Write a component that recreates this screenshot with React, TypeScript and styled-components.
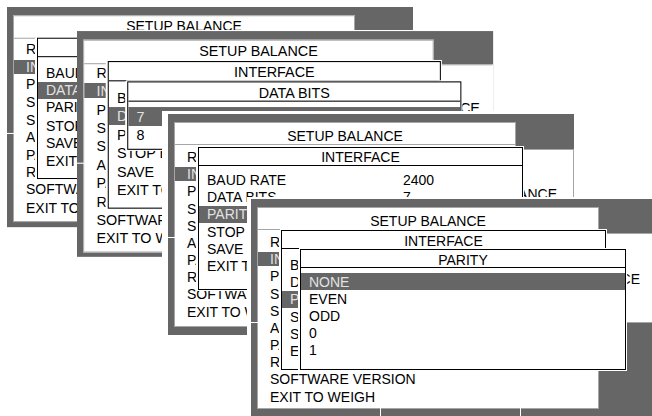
import styled, { createGlobalStyle } from "styled-components";

const GlobalStyle = createGlobalStyle`
  html, body {
    margin: 0;
    padding: 0;
    background: #ffffff;
  }
  body {
    font-family: "Liberation Sans", Arial, sans-serif;
    font-size: 14px;
    color: #000;
  }
`;

type Row = { label: string; value?: string };

type SubDialog = {
  title: string;
  rows: string[];
  active: number;
  top: number;
  gap: number;
  height: number;
};

type Shot = {
  x: number;
  y: number;
  sx: number;
  sy: number;
  padLeft: number;
  padTop: number;
  frameH: number;
  panelH: number;
  titlePad: [number, number];
  mainGap: number;
  sideTop: number;
  sideText: [number, number];
  sideEdge: boolean;
  ifTop: number;
  ifBottom: number;
  ifTitlePad: number;
  ifGap: number;
  active: number;
  sub?: SubDialog;
};

const MAIN_ROWS = [
  "READOUT",
  "INTERFACE",
  "PRINT",
  "STABILITY",
  "SLEEP",
  "AUTO-ZERO",
  "PASSWORD",
  "RESET",
  "SOFTWARE VERSION",
  "EXIT TO WEIGH",
];

const INTERFACE_ROWS: Row[] = [
  { label: "BAUD RATE", value: "2400" },
  { label: "DATA BITS", value: "7" },
  { label: "PARITY", value: "NONE" },
  { label: "STOP BITS", value: "1" },
  { label: "SAVE" },
  { label: "EXIT TO MENU" },
];

const SHOTS: Shot[] = [
  {
    x: 7,
    y: 7,
    sx: 1,
    sy: 1.024,
    padLeft: 0,
    padTop: 0,
    frameH: 215,
    panelH: 202,
    titlePad: [0, 3],
    mainGap: 1.4,
    sideTop: 34,
    sideText: [37, 16],
    sideEdge: true,
    ifTop: 30,
    ifBottom: 168,
    ifTitlePad: 2,
    ifGap: 6.4,
    active: 1,
  },
  {
    x: 77,
    y: 31,
    sx: 1.025,
    sy: 1.07,
    padLeft: 0,
    padTop: 1,
    frameH: 211,
    panelH: 199,
    titlePad: [0, 3],
    mainGap: -1,
    sideTop: 31,
    sideText: [32, 12],
    sideEdge: false,
    ifTop: 28,
    ifBottom: 166,
    ifTitlePad: 1.5,
    ifGap: 6.7,
    active: 1,
    sub: { title: "DATA BITS", rows: ["7", "8"], active: 0, top: 47, gap: 5.4, height: 64 },
  },
  {
    x: 168,
    y: 114,
    sx: 1,
    sy: 1,
    padLeft: 6,
    padTop: 3,
    frameH: 221,
    panelH: 205,
    titlePad: [5, 0],
    mainGap: 3.4,
    sideTop: 35,
    sideText: [36, 16],
    sideEdge: true,
    ifTop: 33,
    ifBottom: 176,
    ifTitlePad: 0,
    ifGap: 5.4,
    active: 2,
  },
  {
    x: 251,
    y: 199,
    sx: 1,
    sy: 1,
    padLeft: 4,
    padTop: 2,
    frameH: 218,
    panelH: 202,
    titlePad: [5, 0],
    mainGap: 3.4,
    sideTop: 34,
    sideText: [37, 16],
    sideEdge: true,
    ifTop: 31,
    ifBottom: 171,
    ifTitlePad: 3,
    ifGap: 7.4,
    active: 2,
    sub: {
      title: "PARITY",
      rows: ["NONE", "EVEN", "ODD", "0", "1"],
      active: 0,
      top: 50,
      gap: 5,
      height: 121,
    },
  },
];

const Desk = styled.div`
  position: relative;
  width: 652px;
  height: 416px;
  overflow: hidden;
  background: #ffffff;
`;

const Capture = styled.div`
  position: absolute;
  transform-origin: 0 0;
  background: #ffffff;
`;

const Frame = styled.div<{ $h: number }>`
  position: relative;
  display: flex;
  align-items: flex-start;
  width: 406px;
  height: ${(p) => p.$h}px;
  padding: 8px 0 0 6px;
  box-sizing: border-box;
  background: #666666;
`;

/* thin white seams where the photographed display was stitched */
const Seam = styled.span<{ $side: "left" | "bottom"; $at: number }>`
  position: absolute;
  background: #ffffff;
  ${(p) =>
    p.$side === "left"
      ? `left: 0; top: ${p.$at}px; width: 7px; height: 1px;`
      : `bottom: 0; left: ${p.$at}px; width: 1px; height: 9px;`}
`;

const Panel = styled.div<{ $h: number }>`
  display: flex;
  flex-direction: column;
  width: 342px;
  height: ${(p) => p.$h}px;
  box-sizing: border-box;
  border: 1px solid #a6a6a6;
  background: #ffffff;
  overflow: hidden;
`;

const PanelTitle = styled.div<{ $pad: [number, number] }>`
  display: flex;
  flex-shrink: 0;
  align-items: center;
  justify-content: center;
  height: 22px;
  padding: ${(p) => `${p.$pad[0]}px 0 ${p.$pad[1]}px`};
  box-sizing: border-box;
  border-bottom: 1px solid #a6a6a6;
`;

const RowList = styled.div<{ $gap: number }>`
  display: flex;
  flex-direction: column;
  margin-top: ${(p) => p.$gap}px;
`;

const MenuRow = styled.div<{ $on?: boolean; $indent: number; $inset?: number }>`
  display: flex;
  flex-shrink: 0;
  align-items: center;
  height: 17.2px;
  padding-left: ${(p) => p.$indent}px;
  white-space: nowrap;
  overflow: hidden;
  background: ${(p) => {
    if (!p.$on) return "transparent";
    const i = p.$inset ?? 0;
    return `linear-gradient(to bottom, transparent ${i}px, #666666 ${i}px, #666666 calc(100% - ${i}px), transparent calc(100% - ${i}px))`;
  }};
  color: ${(p) => (p.$on ? "#e2e2e2" : "#000000")};
`;

const Label = styled.span<{ $width?: number }>`
  display: inline-block;
  width: ${(p) => (p.$width ? `${p.$width}px` : "auto")};
  flex-shrink: 0;
`;

const Side = styled.div<{ $top: number; $text: [number, number]; $edge: boolean }>`
  flex: 1;
  height: ${(p) => 124 - p.$top}px;
  margin-top: ${(p) => p.$top - 8}px;
  margin-left: -1px;
  box-sizing: border-box;
  padding: ${(p) => `${p.$text[0]}px ${p.$text[1]}px 0 0`};
  border: 1px solid #a6a6a6;
  border-right-color: ${(p) => (p.$edge ? "#a6a6a6" : "#ffffff")};
  background: #ffffff;
  text-align: right;
  white-space: nowrap;
  overflow: hidden;
  direction: rtl;
`;

const Dialog = styled.div<{ $left: number; $top: number; $width: number; $height: number }>`
  position: absolute;
  left: ${(p) => p.$left}px;
  top: ${(p) => p.$top}px;
  width: ${(p) => p.$width}px;
  height: ${(p) => p.$height}px;
  box-sizing: border-box;
  border: 1px solid #000000;
  background: #ffffff;
  box-shadow: -2px 0 0 0 #ffffff, 0 0 0 1px #ffffff;
  overflow: hidden;
`;

const DialogTitle = styled.div<{ $pad: number }>`
  display: flex;
  flex-shrink: 0;
  justify-content: center;
  align-items: center;
  height: 18px;
  padding-top: ${(p) => p.$pad}px;
  box-sizing: border-box;
  border-bottom: 1px solid #000000;
`;

function Screenshot({ shot }: { shot: Shot }) {
  return (
    <Capture
      style={{
        left: shot.x - shot.padLeft,
        top: shot.y - shot.padTop * shot.sy,
        padding: `${shot.padTop}px 0 0 ${shot.padLeft}px`,
        transform: `scale(${shot.sx}, ${shot.sy})`,
      }}
    >
      <Frame $h={shot.frameH}>
        <Panel $h={shot.panelH}>
          <PanelTitle $pad={shot.titlePad}>SETUP BALANCE</PanelTitle>
          <RowList $gap={shot.mainGap}>
            {MAIN_ROWS.map((r, i) => (
              <MenuRow key={r} $indent={12} $inset={1.5} $on={i === 1}>
                {r}
              </MenuRow>
            ))}
          </RowList>
        </Panel>
        <Side $top={shot.sideTop} $text={shot.sideText} $edge={shot.sideEdge}>
          SETUP BALANCE
        </Side>

        <Dialog
          $left={30}
          $top={shot.ifTop}
          $width={325}
          $height={shot.ifBottom - shot.ifTop}
        >
          <DialogTitle $pad={shot.ifTitlePad}>INTERFACE</DialogTitle>
          <RowList $gap={shot.ifGap}>
            {INTERFACE_ROWS.map((r, i) => (
              <MenuRow key={r.label} $indent={8} $on={i === shot.active}>
                <Label $width={196}>{r.label}</Label>
                {r.value && <Label>{r.value}</Label>}
              </MenuRow>
            ))}
          </RowList>
        </Dialog>

        {shot.sub && (
          <Dialog $left={49} $top={shot.sub.top} $width={326} $height={shot.sub.height}>
            <DialogTitle $pad={2}>{shot.sub.title}</DialogTitle>
            <RowList $gap={shot.sub.gap}>
              {shot.sub.rows.map((r, i) => (
                <MenuRow key={r} $indent={8} $on={i === shot.sub!.active}>
                  {r}
                </MenuRow>
              ))}
            </RowList>
          </Dialog>
        )}

        <Seam $side="left" $at={123} />
        <Seam $side="bottom" $at={129} />
        <Seam $side="bottom" $at={269} />
      </Frame>
    </Capture>
  );
}

export default function App() {
  return (
    <>
      <GlobalStyle />
      <Desk>
        {SHOTS.map((s) => (
          <Screenshot key={`${s.x}-${s.y}`} shot={s} />
        ))}
      </Desk>
    </>
  );
}
